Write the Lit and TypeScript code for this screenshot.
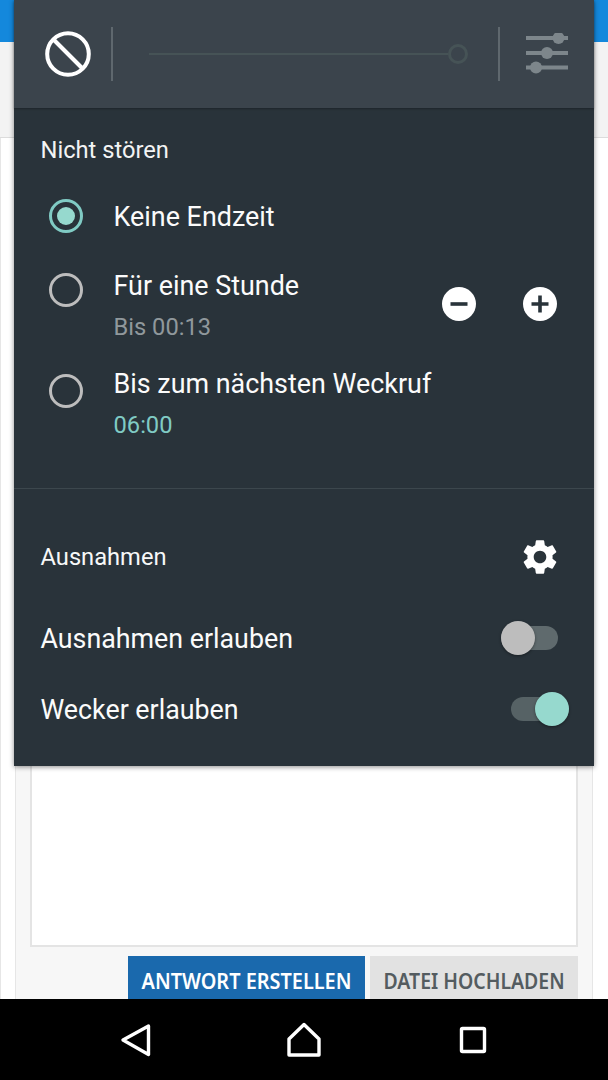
import { LitElement, html, css } from "lit";
import { customElement } from "lit/decorators.js";

const GEAR = "M19.14 12.94c.04-.3.06-.61.06-.94 0-.32-.02-.64-.07-.94l2.03-1.58c.18-.14.23-.41.12-.61l-1.92-3.32c-.12-.22-.37-.29-.59-.22l-2.39.96c-.5-.38-1.03-.7-1.62-.94l-.36-2.54c-.04-.24-.24-.41-.48-.41h-3.84c-.24 0-.43.17-.47.41l-.36 2.54c-.59.24-1.13.57-1.62.94l-2.39-.96c-.22-.08-.47 0-.59.22L2.74 8.87c-.12.21-.08.47.12.61l2.03 1.58c-.05.3-.09.63-.09.94s.02.64.07.94l-2.03 1.58c-.18.14-.23.41-.12.61l1.92 3.32c.12.22.37.29.59.22l2.39-.96c.5.38 1.03.7 1.62.94l.36 2.54c.05.24.24.41.48.41h3.84c.24 0 .44-.17.47-.41l.36-2.54c.59-.24 1.13-.56 1.62-.94l2.39.96c.22.08.47 0 .59-.22l1.92-3.32c.12-.22.07-.47-.12-.61l-2.01-1.58zM12 15.6c-1.98 0-3.6-1.62-3.6-3.6s1.62-3.6 3.6-3.6 3.6 1.62 3.6 3.6-1.62 3.6-3.6 3.6z";

@customElement("app-root")
export class AppRoot extends LitElement {
  static styles = css`
    :host { display: block; width: 608px; height: 1080px; font-family: Roboto, sans-serif; overflow: hidden; }
    * { box-sizing: border-box; }
    .screen { position: relative; width: 608px; height: 1080px; display: flex; flex-direction: column; background: #fff; }
    .page { flex: 1; min-height: 0; display: flex; flex-direction: column; overflow: hidden; }
    .appbar { height: 42px; background: #1488dc; flex: none; }
    .band { height: 96px; background: #f3f3f3; border-bottom: 1px solid #dcdcdc; flex: none; }
    .content { flex: 1; min-height: 0; padding: 0 15px 0 14px; background: #fff; display: flex; border-left: 1px solid #e6e6e6; }
    .card { flex: 1; background: #f7f7f7; border: 1px solid #e6e6e6; border-bottom: 0; padding: 0 14px; display: flex; flex-direction: column; }
    .textarea { flex: 1; background: #fff; border: 2px solid #e4e4e4; margin-bottom: 9px; margin-top: 20px; }
    .actions { display: flex; justify-content: flex-end; gap: 5px; height: 43px; flex: none; }
    .btn { font-family: "Noto Sans", sans-serif; font-weight: 600; font-size: 21.5px; line-height: 50px; white-space: nowrap; display: flex; justify-content: center; height: 43px; overflow: hidden; }
    .btn.primary { width: 237px; background: #1a69ad; color: #fff; }
    .btn.secondary { width: 208px; background: #e2e2e2; color: #545c60; }
    .btn span { display: inline-block; flex: none; transform-origin: center; transform: scaleX(0.925); }
    .btn.secondary span { transform: scaleX(0.905); }

    .nav { height: 81px; flex: none; background: #000; display: flex; align-items: center; justify-content: center; }
    .nav svg { display: block; }
    .navicons { width: 608px; display: grid; grid-template-columns: 120px 31px 136px 34px 137px 30px; height: 81px; align-items: center; }

    .panel { position: absolute; left: 14px; top: 0; width: 580px; height: 766px; background: #29333a; box-shadow: 0 1px 5px rgba(0,0,0,.45); color: #fff; display: flex; flex-direction: column; }
    .head { height: 108px; flex: none; background: #3b444c; box-shadow: 0 1px 2px rgba(0,0,0,.3); display: flex; align-items: center; }
    .dnd { margin-left: 30px; flex: none; display: block; }
    .vdiv { width: 2px; height: 54px; background: #5f686e; flex: none; }
    .vdiv.a { margin-left: 19px; }
    .slider { flex: none; width: 319px; margin-left: 36px; margin-right: 30px; display: flex; align-items: center; }
    .track { flex: 1; height: 2px; background: #465356; }
    .thumb { width: 20px; height: 20px; border-radius: 50%; border: 3px solid #465356; flex: none; }
    .tune { margin-left: 26px; flex: none; display: block; }

    .title { height: 82px; flex: none; display: flex; align-items: center; padding: 2px 0 0 26.5px; font-size: 23.7px; color: #f3f4f4; }
    .opts { display: flex; flex-direction: column; margin-bottom: 26px; }
    .opt { display: grid; grid-template-columns: 99.5px 1fr; position: relative; }
    .opt.one { height: 52px; align-items: center; }
    .opt.one .label { padding-top: 2px; }
    .opt.two { height: 98px; }
    .opt.two.first { margin-top: 24px; }
    .opt .radio { margin-left: 35px; width: 34px; height: 34px; border-radius: 50%; border: 3px solid #bdbdbd; display: flex; align-items: center; justify-content: center; }
    .opt.two.first .radio { margin-top: 7px; }
    .opt.two.last .radio { margin-top: 10px; }
    .radio.on { border-color: #80cbc4; }
    .radio.on::after { content: ""; width: 18px; height: 18px; border-radius: 50%; background: #96d9ce; }
    .label { font-size: 26.9px; line-height: 40px; color: #fbfbfb; white-space: nowrap; }
    .sub { font-size: 23.7px; line-height: 42px; white-space: nowrap; }
    .sub.grey { color: #90989c; }
    .sub.teal { color: #80cbc4; }
    .stepper { position: absolute; left: 428px; top: 21px; display: flex; gap: 47px; }
    .stepper svg { display: block; }

    .hr { height: 1px; background: #3c474d; flex: none; }
    .ex-head { height: 70px; margin-top: 33px; margin-bottom: 10px; flex: none; display: flex; align-items: center; justify-content: space-between; padding: 0 33px 0 26.5px; font-size: 23.7px; color: #f7f8f8; }
    .ex-head svg { display: block; }
    .row { height: 71px; flex: none; display: flex; align-items: center; justify-content: space-between; padding-left: 26.5px; font-size: 26.8px; color: #fbfbfb; }
    .row span { padding-top: 2px; }
    .switch { position: relative; height: 34px; flex: none; }
    .row.off .switch { width: 57px; margin-right: 36px; }
    .row.on .switch { width: 58px; margin-right: 25px; }
    .switch i { position: absolute; top: 5px; height: 24px; border-radius: 12px; background: #5f6a6d; left: 0; right: 0; }
    .row.on .switch i { background: #566265; }
    .switch b { position: absolute; top: 0; width: 34px; height: 34px; border-radius: 50%; box-shadow: 0 1px 3px rgba(0,0,0,.4); }
    .row.off .switch b { left: 0; background: #bdbdbd; }
    .row.on .switch b { right: 0; background: #96d9ce; }
  `;

  render() {
    return html`
      <div class="screen">
        <div class="page">
          <div class="appbar"></div>
          <div class="band"></div>
          <div class="content">
            <div class="card">
              <div class="textarea"></div>
              <div class="actions">
                <div class="btn primary"><span>ANTWORT ERSTELLEN</span></div>
                <div class="btn secondary"><span>DATEI HOCHLADEN</span></div>
              </div>
            </div>
          </div>
        </div>
        <div class="nav">
          <div class="navicons">
            <span></span>
            <svg width="31" height="34" viewBox="0 0 31 34"><path d="M28.5 3 L3 17 L28.5 31.5 Z" fill="none" stroke="#fff" stroke-width="3.4" stroke-linejoin="round"/></svg>
            <span></span>
            <svg width="34" height="36" viewBox="0 0 34 36"><path d="M17 2.500 L32 17 V33 H2 V17 Z" fill="none" stroke="#fff" stroke-width="3.4" stroke-linejoin="round"/></svg>
            <span></span>
            <svg width="30" height="30" viewBox="0 0 30 30"><rect x="3.500" y="3.500" width="23" height="23" rx="1" fill="none" stroke="#fff" stroke-width="3.4"/></svg>
          </div>
        </div>

        <div class="panel">
          <div class="head">
            <svg class="dnd" width="48" height="48" viewBox="0 0 48 48">
              <circle cx="24" cy="24" r="20.800" fill="none" stroke="#fff" stroke-width="4"/>
              <path d="M9.500 9.500 L38.500 38.500" stroke="#fff" stroke-width="4"/>
            </svg>
            <div class="vdiv a"></div>
            <div class="slider"><div class="track"></div><div class="thumb"></div></div>
            <div class="vdiv"></div>
            <svg class="tune" width="43" height="42" viewBox="0 0 43 42">
              <g fill="#7d868b">
                <rect x="0" y="3" width="42" height="4"/>
                <rect x="0" y="18" width="42" height="4"/>
                <rect x="0" y="32.500" width="42" height="4"/>
                <circle cx="32.500" cy="5" r="6"/>
                <circle cx="21" cy="20" r="6"/>
                <circle cx="10" cy="34.500" r="6"/>
              </g>
            </svg>
          </div>
          <div class="title">Nicht stören</div>
          <div class="opts">
            <div class="opt one"><div class="radio on"></div><div class="label">Keine Endzeit</div></div>
            <div class="opt two first">
              <div class="radio"></div>
              <div><div class="label">Für eine Stunde</div><div class="sub grey">Bis 00:13</div></div>
              <div class="stepper">
                <svg width="34" height="34" viewBox="0 0 34 34"><circle cx="17" cy="17" r="17" fill="#fff"/><rect x="8.500" y="15.200" width="17" height="3.600" fill="#29333a"/></svg>
                <svg width="34" height="34" viewBox="0 0 34 34"><circle cx="17" cy="17" r="17" fill="#fff"/><path d="M8.500 15.200h6.700v-6.700h3.600v6.700h6.700v3.600h-6.700v6.700h-3.600v-6.700h-6.700z" fill="#29333a"/></svg>
              </div>
            </div>
            <div class="opt two last">
              <div class="radio"></div>
              <div><div class="label">Bis zum nächsten Weckruf</div><div class="sub teal">06:00</div></div>
            </div>
          </div>
          <div class="hr"></div>
          <div class="ex-head">
            <span>Ausnahmen</span>
            <svg width="42" height="42" viewBox="0 0 24 24"><path d="${GEAR}" fill="#fff"/></svg>
          </div>
          <div class="row off"><span>Ausnahmen erlauben</span><div class="switch"><i></i><b></b></div></div>
          <div class="row on"><span>Wecker erlauben</span><div class="switch"><i></i><b></b></div></div>
        </div>
      </div>
    `;
  }
}
